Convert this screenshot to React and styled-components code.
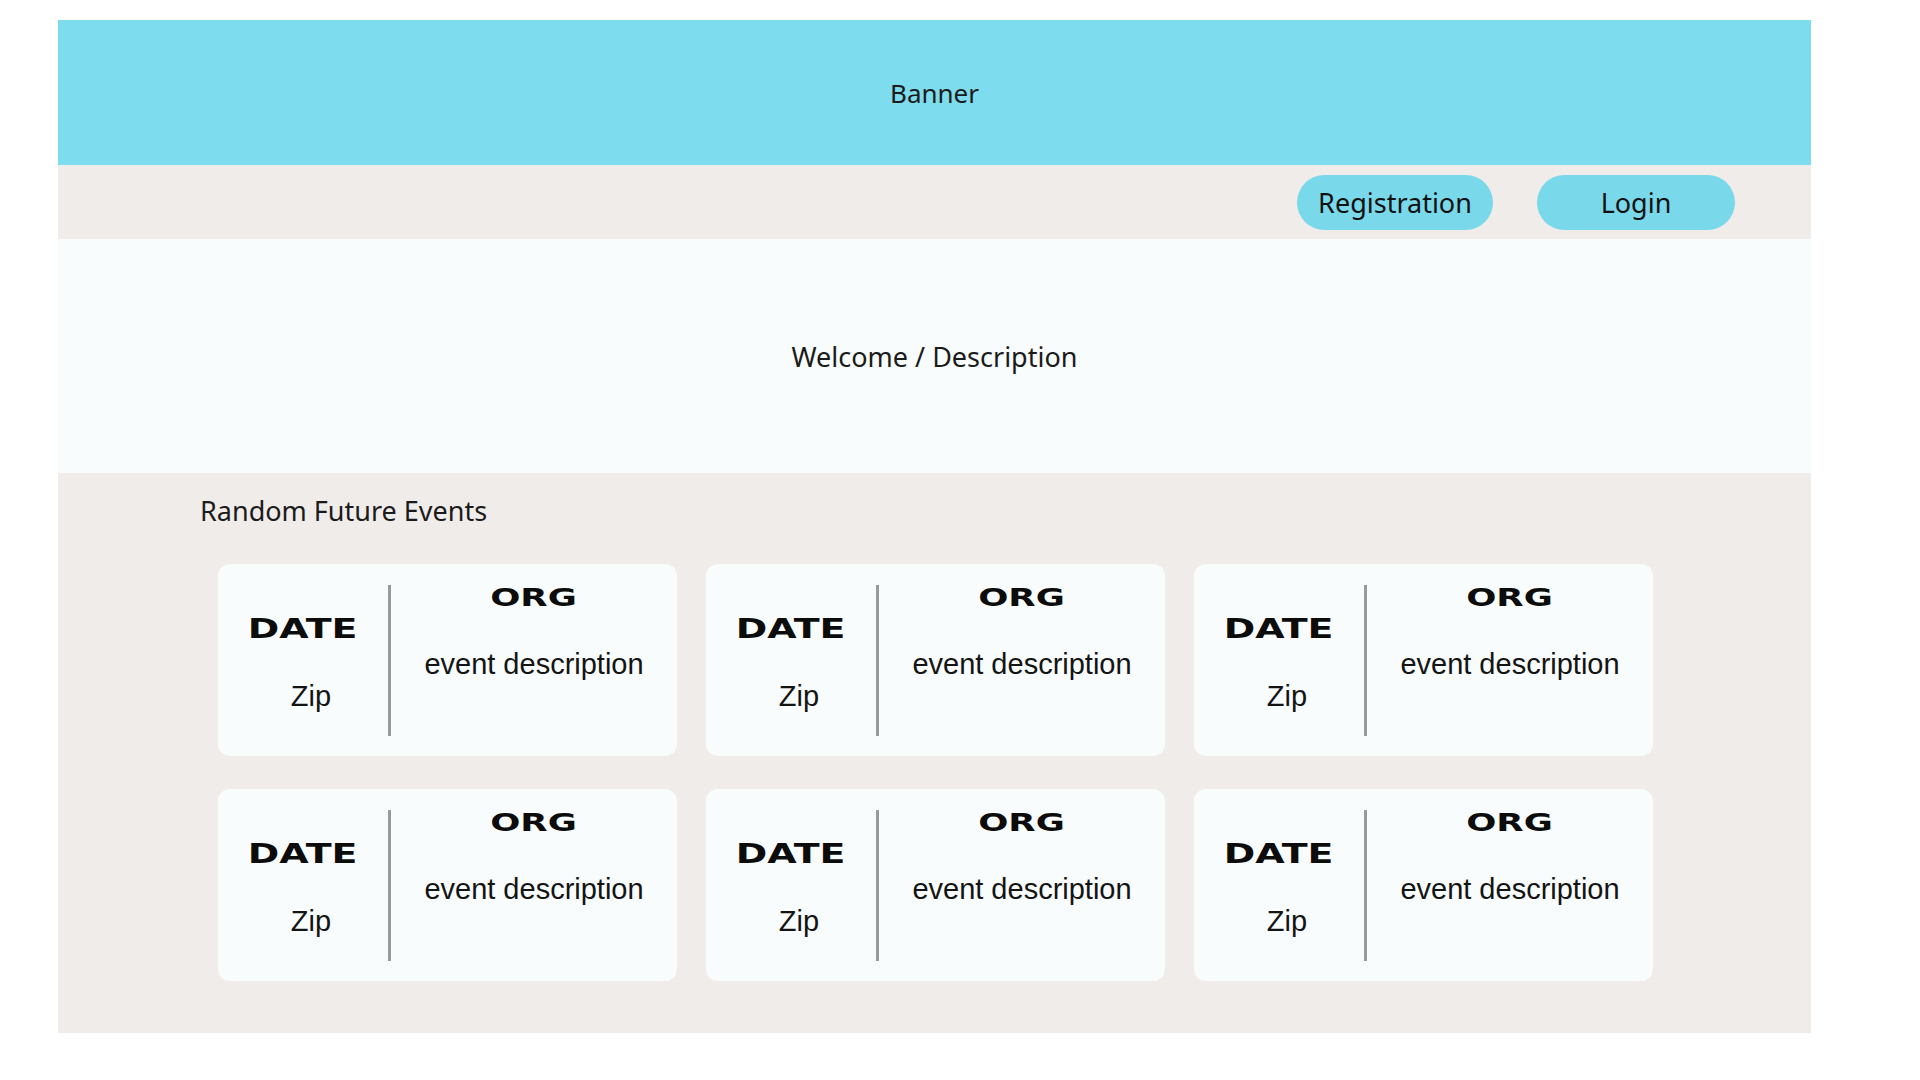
import styled, { createGlobalStyle } from 'styled-components';

const GlobalStyle = createGlobalStyle`
  body {
    margin: 0;
    background: #ffffff;
    font-family: "Noto Sans", "Open Sans", sans-serif;
    color: #1b1b1b;
  }
`

const Page = styled.div`
  width: 1753px;
  margin: 20px 0 0 58px;
  display: flex;
  flex-direction: column;
`

const Banner = styled.header`
  height: 145px;
  background: #7ddced;
  display: flex;
  align-items: center;
  justify-content: center;
  font-size: 26px;
`

const NavBar = styled.nav`
  height: 74px;
  background: #f0ecea;
  display: flex;
  align-items: center;
  justify-content: flex-end;
  gap: 44px;
  padding-right: 76px;
  box-sizing: border-box;
`

const NavButton = styled.button`
  width: ${p => p.$w}px;
  height: 55px;
  border: none;
  border-radius: 28px;
  background: #79d8ea;
  font-family: "Noto Sans", sans-serif;
  font-size: 27px;
  color: #111;
  cursor: pointer;
  padding: 0;
`

const Welcome = styled.section`
  height: 234px;
  background: #f8fcfd;
  display: flex;
  align-items: center;
  justify-content: center;
  font-size: 27px;
`

const Events = styled.section`
  height: 560px;
  background: #f0ecea;
  box-sizing: border-box;
  padding: 22px 0 0 142px;
`

const Heading = styled.h2`
  margin: 0;
  font-weight: 400;
  font-size: 27px;
  line-height: 32px;
`

const CardGrid = styled.div`
  display: grid;
  grid-template-columns: repeat(3, 459px);
  grid-auto-rows: 192px;
  column-gap: 29px;
  row-gap: 33px;
  margin: 37px 0 0 18px;
`

const Card = styled.article`
  background: #f8fcfd;
  border-radius: 12px;
  display: grid;
  grid-template-columns: 170px 3px 1fr;
`

const LeftCol = styled.div`
  display: flex;
  flex-direction: column;
  align-items: center;
  padding-top: 52px;
`

const RightCol = styled.div`
  display: flex;
  flex-direction: column;
  align-items: center;
  padding-top: 21px;
`

const Divider = styled.div`
  background: #9a9a9a;
  margin: 21px 0 20px;
`

const Wide = styled.span`
  display: inline-block;
  font-family: "DejaVu Sans", sans-serif;
  font-weight: 700;
  font-size: ${p => p.$size}px;
  line-height: ${p => p.$size}px;
  transform: scaleX(${p => p.$stretch});
  color: #0c0c0c;
`

const Plain = styled.span`
  font-family: "Liberation Sans", Arial, sans-serif;
  font-size: 29px;
  line-height: 29px;
  margin-top: ${p => p.$top}px;
  margin-left: ${p => p.$left || 0}px;
  color: #141414;
`

const events = Array.from({ length: 6 }, (_, i) => ({ id: i }))

function EventCard() {
  return (
    <Card>
      <LeftCol>
        <Wide $size={26} $stretch={1.46}>DATE</Wide>
        <Plain $top={40} $left={16}>Zip</Plain>
      </LeftCol>
      <Divider />
      <RightCol>
        <Wide $size={25} $stretch={1.42}>ORG</Wide>
        <Plain $top={40}>event description</Plain>
      </RightCol>
    </Card>
  )
}

export default function App() {
  return (
    <>
      <GlobalStyle />
      <Page>
        <Banner>Banner</Banner>
        <NavBar>
          <NavButton $w={196}>Registration</NavButton>
          <NavButton $w={198}>Login</NavButton>
        </NavBar>
        <Welcome>Welcome / Description</Welcome>
        <Events>
          <Heading>Random Future Events</Heading>
          <CardGrid>
            {events.map(e => <EventCard key={e.id} />)}
          </CardGrid>
        </Events>
      </Page>
    </>
  )
}
